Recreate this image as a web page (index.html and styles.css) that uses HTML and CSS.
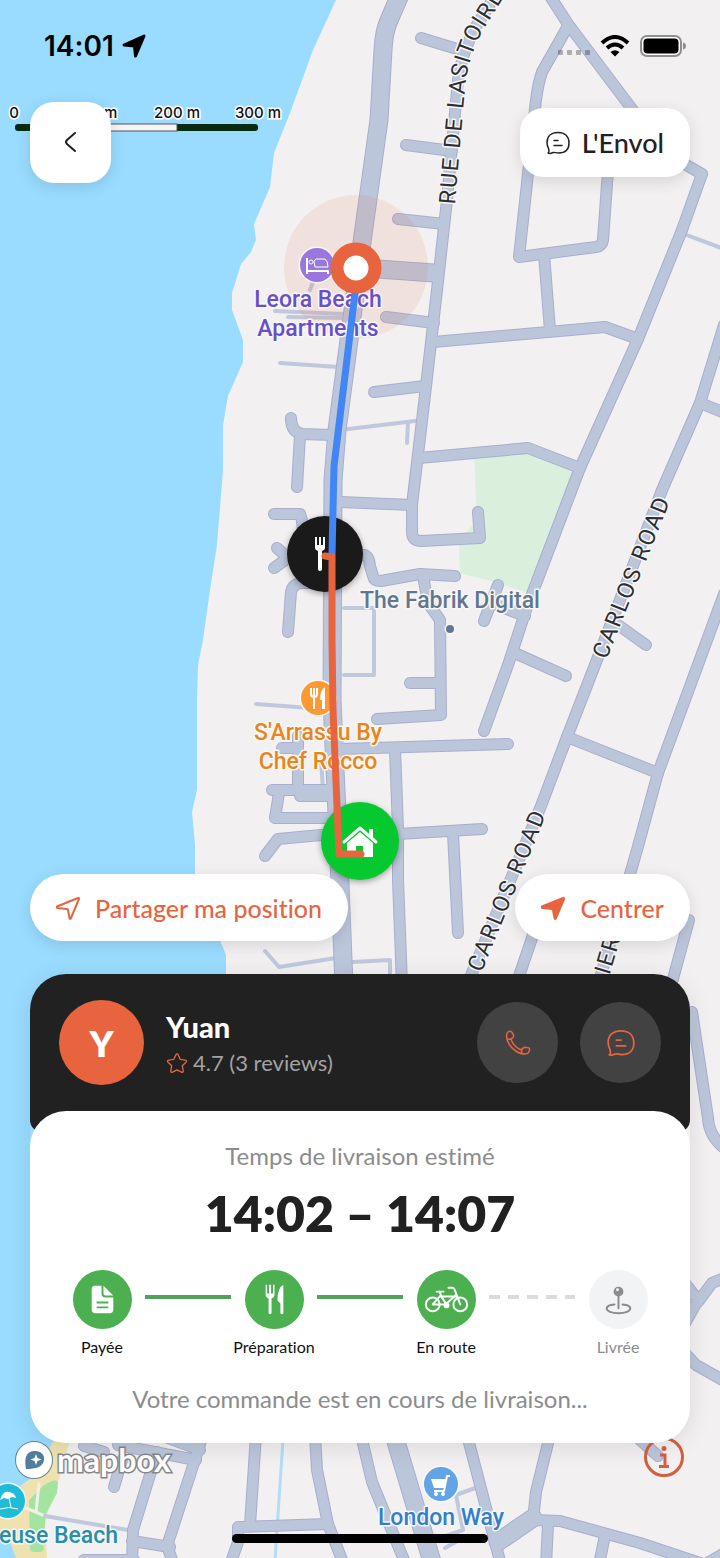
FILE: index.html
```html
<!DOCTYPE html>
<html lang="fr">
<head>
    <meta charset="UTF-8">
    <meta name="viewport" content="width=device-width, initial-scale=1.0">
    <title>Suivi de commande</title>
    <link rel="stylesheet" href="styles.css">
</head>
<body>
    <svg class="map" viewBox="0 0 720 1558" preserveAspectRatio="xMidYMax slice" role="img" aria-label="Carte de la livraison">
        <defs>
            <g id="roads-wide">
                <path d="M402 -10 L390 18 Q384 30 383 50 L379 120 L362 242 L349 340 L337 430 L333 480 L332 700 L339 860 L344 985"/>
                <path d="M364 268 L434 273"/>
                <path d="M394 1435 L433 1565"/>
                <path d="M498 1542 L533 1518"/>
            </g>
            <g id="roads">
                <path d="M500 -12 L475 28 Q461 56 458 80 L447 200 L437 290 L425 395 L412 505 V532 Q412 541 421 541 L480 538 L478 512"/>
                <path d="M421 38 L457 49"/>
                <path d="M406 145 L452 151"/>
                <path d="M398 219 L444 224"/>
                <path d="M386 317 L434 323"/>
                <path d="M374 392 L425 386"/>
                <path d="M433 342 L605 327 L638 339"/>
                <path d="M419 458 L528 448 L580 468"/>
                <path d="M546 -10 L568 24 L635 113 L660 150 L702 174 L682 230 L638 339 L580 468 L526 610 L508 665 L484 731"/>
                <path d="M568 26 L542 72 Q538 84 536 100 L519 257 L596 247 Q602 246 603 240 L608 170"/>
                <path d="M544 254 L550 330"/>
                <path d="M724 325 L700 403 L662 490 L600 652 L567 737 L541 806 L467 985"/>
                <path d="M700 403 L730 415"/>
                <path d="M614 622 L646 645"/>
                <path d="M517 654 L566 676"/>
                <path d="M567 737 L658 773"/>
                <path d="M724 594 L658 773 L637 850 L598 985"/>
                <path d="M548 890 L532 938 L516 985"/>
                <path d="M689 920 L670 990"/>
                <path d="M692 1012 L708 1118 Q709 1136 724 1148"/>
                <path d="M684 1282 L698 1300 L684 1325 M698 1302 L712 1283 L724 1278 M682 1350 L696 1365 L728 1383"/>
                <path d="M291 418 Q291 432 302 434 L332 435 M300 435 L297 487"/>
                <path d="M274 514 H300 Q303 520 303 540"/>
                <path d="M277 548 L288 558 L274 568 M286 557 H310"/>
                <path d="M288 632 L291 592 Q293 583 303 583 H326"/>
                <path d="M340 502 L412 505"/>
                <path d="M364 555 Q369 556 370 566 L373 576 Q374 581 381 581 L420 574 L455 576"/>
                <path d="M423 576 L428 603 L440 620 L441 715 L377 719"/>
                <path d="M410 683 H440"/>
                <path d="M498 585 L484 621 M499 606 L525 616"/>
                <path d="M340 749 L508 744"/>
                <path d="M395 748 L398 830 L398 880 L402 985"/>
                <path d="M398 834 L482 829 M453 833 L458 933"/>
                <path d="M272 790 H332 M298 736 V790 M282 748 H298 M330 796 H300"/>
                <path d="M279 793 L275 818 H332"/>
                <path d="M265 856 L278 839 L332 834"/>
                <path d="M203 1435 L167 1546 L174 1565"/>
                <path d="M157 1452 L133 1530 L132 1565 M132 1541 L170 1547 M84 1560 H134"/>
                <path d="M84 1446 L104 1452 M114 1487 L122 1460 M118 1445 L196 1460 M160 1435 L200 1450"/>
                <path d="M256 1435 L250 1525 M238 1527 L328 1524 M238 1527 L238 1542 L230 1565"/>
                <path d="M315 1435 L317 1470 L328 1524 L344 1565"/>
                <path d="M361 1435 L372 1482 L406 1565"/>
                <path d="M467 1435 L501 1565"/>
                <path d="M550 1435 L536 1492 L533 1520 L560 1521 L640 1543 L700 1563"/>
                <path d="M548 1524 L546 1565 M605 1535 L599 1565 M730 1550 L704 1565"/>
                <path d="M638 1438 L658 1456"/>
            </g>
            <path id="rue-lasitoire" d="M447 204 L455 110 L458 80 Q461 56 475 28 L530 -60"/>
            <path id="carlos-north" d="M599 657 L662 500 L690 430"/>
            <path id="carlos-south" d="M474 970 L541 806 L560 760"/>
            <path id="rue-est" d="M585 1030 L622 905"/>
        </defs>

        <rect class="land" width="720" height="1558"/>
        <path class="sea" d="M0 0 H336 L313 50 L290 113 L274 153 L270 187 L254 224 L256 240 L251 252 L241 264 L232 293 V310 L243 340 V362 L228 396 L223 425 V470 L217 545 L210 590 L203 640 L198 665 L197 700 V790 L192 812 L195 845 V885 L212 915 L220 940 L226 955 V1080 L120 1300 L56 1443 L32 1478 L0 1500Z"/>
        <path class="sand" d="M54 1440 H70 L58 1482 L45 1520 L47 1558 H16 L10 1545 L0 1540 V1500 L32 1478Z"/>
        <path class="sea" d="M0 1542 H10 L16 1558 H0Z"/>
        <path class="park" d="M474 455 L528 448 L580 468 L533 595 L498 583 L460 573 L459 541 L477 520Z"/>
        <path class="green" d="M43 1486 Q57 1477 58 1483 L57 1493 L46 1514 L43 1545 Q46 1552 39 1552 H34 Q29 1552 30 1546 L29 1500Z"/>
        <path class="stream" d="M283 1440 L275 1560"/>
        <path class="path-light" d="M26 1508 L45 1516 M39 1484 L36 1512"/>
        <path class="lane" d="M280 363 L338 367 M340 430 L415 421 M408 422 L407 443 M684 234 L724 249 M344 608 H374 V675 H344 M256 704 L310 708 M321 760 L323 790 M265 951 L279 967 L336 958 M353 962 L390 960 V985 M45 1516 L128 1530 M478 1487 L456 1495 L463 1530 L440 1538 M463 1538 L445 1548 M275 311 L344 314 M288 317 L344 318 M313 282 L310 290"/>

        <use href="#roads-wide" class="road-wide edge"/>
        <use href="#roads" class="road edge"/>
        <use href="#roads-wide" class="road-wide"/>
        <use href="#roads" class="road"/>

        <circle class="pulse" cx="356" cy="267" r="72"/>

        <!-- street names -->
        <g class="street">
            <text dy="8"><textPath href="#rue-lasitoire">RUE DE LASITOIRE</textPath></text>
            <text dy="8"><textPath href="#carlos-north">CARLOS ROAD</textPath></text>
            <text dy="8"><textPath href="#carlos-south">CARLOS ROAD</textPath></text>
            <text dy="8"><textPath href="#rue-est" startOffset="8">GENIER</textPath></text>
        </g>

        <!-- places -->
        <g class="place hotel">
            <circle cx="317" cy="265" r="17"/>
            <path class="glyph-line" d="M307 258 V274 M307 271 H328 V274"/>
            <path class="glyph-line thin" d="M315 267 L314 261 Q316 258 319 259 H325 Q328 261 328 267Z"/>
            <circle class="glyph-line thin" cx="311" cy="262" r="2"/>
            <text x="318" y="307">Leora Beach</text>
            <text x="318" y="336">Apartments</text>
        </g>
        <g class="place office">
            <circle cx="450" cy="629" r="4"/>
            <text x="450" y="608">The Fabrik Digital</text>
        </g>
        <g class="place food">
            <circle cx="318" cy="698" r="17"/>
            <path class="glyph-line" d="M311 688 V694 Q311 697 314 697 Q317 697 317 694 V688 M314 688 V709"/>
            <path class="glyph" d="M325 687 V709 H322 V700 H320 Q320 690 325 687Z"/>
            <text x="318" y="740">S'Arrassu By</text>
            <text x="318" y="769">Chef Rocco</text>
        </g>
        <g class="place shop">
            <circle cx="441" cy="1484" r="17"/>
            <path class="glyph" d="M431 1479 H446 L444 1488 H434Z"/>
            <path class="glyph-line" d="M450 1476 H447 L444 1491 H434"/>
            <circle class="glyph" cx="436" cy="1494" r="2"/>
            <circle class="glyph" cx="443" cy="1494" r="2"/>
            <text x="441" y="1525">London Way</text>
        </g>
        <g class="place beach">
            <circle cx="8" cy="1501" r="17"/>
            <path class="glyph" d="M0 1500 Q3 1490 9 1492 Q15 1493 16 1498 L12 1497 L8 1499 L4 1498Z"/>
            <path class="glyph-line thin" d="M8 1492 L11 1508 M0 1509 Q9 1506 18 1509"/>
            <text class="place-start" x="-1" y="1543">euse Beach</text>
        </g>

        <!-- scale bar -->
        <g class="scale">
            <rect class="scale-dark" x="15" y="124" width="243" height="7" rx="3"/>
            <rect class="scale-light" x="96" y="124" width="81" height="7"/>
            <text x="14" y="118">0</text>
            <text x="96" y="118">100 m</text>
            <text x="177" y="118">200 m</text>
            <text x="258" y="118">300 m</text>
        </g>

        <!-- markers -->
        <circle class="marker-shop" cx="325" cy="554" r="38"/>
        <path class="marker-glyph" d="M315 537 V548 Q315 550 318 551 V570 Q320 572 322 570 V551 Q325 550 325 548 V537 H323 V545 H321 V537 H319 V545 H317 V537Z"/>
        <circle class="marker-home" cx="360" cy="841" r="39"/>
        <path class="marker-roof" d="M344 842 L360 828 L376 842"/>
        <path class="marker-glyph" d="M347 843 L360 832 L373 843 V857 H363 V846 H356 V857 H347Z M369 829 H373 V838 L369 834Z"/>
        <path class="route-done" d="M356 285 L334 466 L332 555"/>
        <path class="route-next" d="M325 556 L332 557 L332 640 L333 710 L339 854 L361 854"/>
        <circle class="courier" cx="356" cy="268" r="19"/>
    </svg>

    <main class="screen">
        <header class="statusbar">
            <div class="clock">
                <span>14:01</span>
                <svg class="locate" viewBox="0 0 24 24" aria-hidden="true"><path d="M2 11 L22 2 L13.500 22 L12.500 12Z"/></svg>
            </div>
            <div class="signals">
                <svg class="dots" viewBox="0 0 32 6" aria-hidden="true">
                    <rect width="5" height="5" rx="1"/><rect x="9" width="5" height="5" rx="1"/><rect x="18" width="5" height="5" rx="1"/><rect x="27" width="5" height="5" rx="1"/>
                </svg>
                <svg class="wifi" viewBox="0 0 30 22" aria-hidden="true">
                    <path d="M2 8 Q15 -4 28 8 M7 13 Q15 6 23 13"/>
                    <path class="wifi-dot" d="M15 21.500 L10.500 17 Q15 13.500 19.500 17Z"/>
                </svg>
                <svg class="battery" viewBox="0 0 46 22" aria-hidden="true">
                    <rect class="battery-case" x="1" y="1" width="40" height="20" rx="6"/>
                    <rect x="3.500" y="3.500" width="35" height="15" rx="4"/>
                    <path class="battery-tip" d="M43 7.500 Q46 8 46 11 Q46 14 43 14.500Z"/>
                </svg>
            </div>
        </header>

        <div class="topbar">
            <button class="back" type="button" aria-label="Retour">
                <svg viewBox="0 0 20 24" aria-hidden="true"><path d="M14 4 L6 11 Q4 13 6 15 L14 22"/></svg>
            </button>
            <button class="place-button" type="button">
                <svg class="icon" viewBox="0 0 24 24" aria-hidden="true"><use href="#chat"/></svg>
                L'Envol
            </button>
        </div>

        <div class="map-actions">
            <button class="pill" type="button">
                <svg class="icon" viewBox="0 0 24 24" aria-hidden="true"><path d="M1 10.500 L22 2 Q23 1.500 23 3 L15 22 Q14 24 13.500 22 L12 14 Q12 13 11 13 L1.500 12 Q0 11.500 1 10.500Z"/></svg>
                Partager ma position
            </button>
            <button class="pill" type="button">
                <svg class="icon filled" viewBox="0 0 24 24" aria-hidden="true"><path d="M1 10.500 L22 2 Q23 1.500 23 3 L15 22 Q14 24 13.500 22 L12 14 Q12 13 11 13 L1.500 12 Q0 11.500 1 10.500Z"/></svg>
                Centrer
            </button>
        </div>

        <section class="order">
            <div class="driver">
                <div class="avatar">Y</div>
                <div class="driver-info">
                    <h1 class="driver-name">Yuan</h1>
                    <p class="rating">
                        <svg viewBox="0 0 24 24" aria-hidden="true"><path d="M12 2 Q12.800 2 13.200 3 L15.500 8 L21 8.800 Q23.500 9.500 21.500 11.500 L17.800 15 L18.800 20.500 Q18.800 23 16.800 22 L12 19.500 L7.200 22 Q5.200 23 5.200 20.500 L6.200 15 L2.500 11.500 Q.500 9.500 3 8.800 L8.500 8 L10.800 3 Q11.200 2 12 2Z"/></svg>
                        4.7 (3 reviews)
                    </p>
                </div>
                <button class="round" type="button" aria-label="Appeler">
                    <svg viewBox="0 0 28 28" aria-hidden="true"><path d="M4 3 Q7 1 9 5 Q10.500 7.500 8.500 9 Q7 10 7.500 11.500 Q10 17.500 16 20.500 Q17.500 21 18.500 19.500 Q20 18 23 18.500 Q26 18.500 25.500 20.500 Q25 25 21 25 C12 25 3 16 2.500 7 Q2.500 4 4 3Z M3 10 Q6 11 8.500 9 M18 25 Q17 22 18.500 19.500"/></svg>
                </button>
                <button class="round" type="button" aria-label="Envoyer un message">
                    <svg viewBox="0 0 24 24" aria-hidden="true">
                        <g id="chat"><path d="M2 22 C3.500 21 3 19 2.500 17.500 C1.500 15.500 1 13.500 1 11.500 C1 5.500 5 1.500 12 1.500 C19 1.500 23 5.500 23 12 C23 18.500 19 22 12.500 22 C10 22 8.500 21 7 21.500 C5 22.500 3.500 23 2 22Z M8 9.500 H12 M8 14.500 H16"/></g>
                    </svg>
                </button>
            </div>

            <div class="delivery">
                <p class="hint">Temps de livraison estimé</p>
                <p class="eta">14:02 – 14:07</p>
                <ol class="steps">
                    <li class="step">
                        <svg class="step-icon" viewBox="0 0 60 60" aria-hidden="true">
                            <path class="solid" d="M22 16 H29 V24 Q29 28 33 28 H41 V40 Q41 44 37 44 H23 Q19 44 19 40 V20 Q19 16 22 16Z M31 16 L41 26 H33 Q31 26 31 24Z"/>
                            <path class="cut" d="M24 33 H36 M24 38 H36"/>
                        </svg>
                        Payée
                    </li>
                    <li class="line"></li>
                    <li class="step">
                        <svg class="step-icon" viewBox="0 0 60 60" aria-hidden="true">
                            <path class="solid" d="M21 15 V25 Q21 28 24 29 V44 Q25.500 46 27 44 V29 Q30 28 30 25 V15 H28.500 V24 H26.500 V15 H24.500 V24 H22.500 V15Z M39 15 V44 Q37.500 46 36 44 V34 L33 31 Q33 18 39 15Z"/>
                        </svg>
                        Préparation
                    </li>
                    <li class="line"></li>
                    <li class="step">
                        <svg class="step-icon" viewBox="0 0 60 60" aria-hidden="true">
                            <circle class="stroke" cx="16" cy="35" r="7"/>
                            <circle class="stroke" cx="44" cy="35" r="7"/>
                            <path class="stroke" d="M16 35 H29 L39 26 M24 26 L30 35 M23 27 L16 35 M24 27 H39 M20 22 H27 M23 22 L25 27 M32 18 H36 Q38 18 39 22 L44 35"/>
                            <circle class="solid" cx="30" cy="36" r="3"/>
                        </svg>
                        En route
                    </li>
                    <li class="line pending"></li>
                    <li class="step todo">
                        <svg class="step-icon" viewBox="0 0 60 60" aria-hidden="true">
                            <circle class="solid" cx="30" cy="22" r="5"/>
                            <path class="stroke" d="M30 26 V39 M26 35 C20 35.500 18 37 18 39 C18 42 23 44 30 44 C37 44 42 42 42 39 C42 37 40 35.500 34 35"/>
                            <circle class="shine" cx="29" cy="20" r="1.500"/>
                        </svg>
                        Livrée
                    </li>
                </ol>
                <p class="hint">Votre commande est en cours de livraison...</p>
            </div>
        </section>

        <footer class="credits">
            <div class="mapbox">
                <svg viewBox="0 0 40 40" aria-hidden="true">
                    <circle class="mb-ring" cx="20" cy="20" r="18"/>
                    <path class="mb-drop" d="M12 29 C10 18 12 11 21 11 C27 11 31 15 30 20 C29 27 22 29 12 29Z"/>
                    <path class="mb-star" d="M22 14 L23.500 18 L27.500 19.500 L23.500 21 L22 25 L20.500 21 L16.500 19.500 L20.500 18Z"/>
                </svg>
                <span>mapbox</span>
            </div>
            <button class="info" type="button" aria-label="Informations sur la carte">
                <svg viewBox="0 0 40 40" aria-hidden="true"><circle cx="20" cy="20" r="18.500"/><path d="M16 18 H21 V29 M15 29.500 H25"/><circle class="info-dot" cx="20" cy="11.500" r="2.500"/></svg>
            </button>
        </footer>
        <div class="home-indicator"></div>
    </main>
</body>
</html>
```
FILE: styles.css
```css
:root {
    --orange: #e8643f;
    --green: #4caf50;
    --dark: #212121;
    --grey: #8c8c8c;
}

* {
    box-sizing: border-box;
}

body {
    margin: 0;
    position: relative;
    overflow-x: hidden;
    font-family: Lato, "Liberation Sans", sans-serif;
    font-variant-ligatures: none;
    color: var(--dark);
    background: #f2f0f0;
}

h1, p, ol {
    margin: 0;
    padding: 0;
    list-style: none;
}

button {
    border: none;
    padding: 0;
    font-family: inherit;
    font-variant-ligatures: none;
    cursor: pointer;
}

/* map */
.map {
    position: absolute;
    top: 0;
    left: 0;
    width: 100%;
    height: 100%;
}

.map path, .map use {
    stroke-linejoin: round;
}

.land { fill: #f2f0f0; }
.sea { fill: #99dcff; }
.sand { fill: #efe2b0; }
.park { fill: #dbf0dc; }
.green { fill: #a5e3a1; }

.stream, .path-light, .lane, .road, .road-wide {
    fill: none;
    stroke-linecap: round;
}

.stream { stroke: #b3dcf7; stroke-width: 3px; }
.path-light { stroke: #efefeb; stroke-width: 3px; }
.lane { stroke: #bfc8dc; stroke-width: 4px; }
.road { stroke: #bcc6da; stroke-width: 10px; }
.road-wide { stroke: #bcc6da; stroke-width: 17px; }
.road.edge { stroke: #a8aecd; stroke-width: 12px; }
.road-wide.edge { stroke: #a8aecd; stroke-width: 19px; }

.pulse { fill: rgba(232, 100, 63, 0.1); }

.street, .place {
    font-family: Roboto, "Liberation Sans", sans-serif;
    font-weight: 500;
    paint-order: stroke;
    stroke: #f8f7f7;
    stroke-width: 3px;
    stroke-linejoin: round;
}

.street {
    font-size: 23px;
    font-weight: 400;
    letter-spacing: 2px;
    fill: #2e2e32;
}

.place {
    font-size: 23px;
    text-anchor: middle;
}

.hotel { fill: #6a4fc8; }
.hotel > circle:first-child { fill: #9a77dc; }
.office { fill: #5f7890; }
.food { fill: #e8861b; }
.food > circle:first-child { fill: #fb9a35; }
.shop { fill: #3080cc; }
.shop > circle:first-child { fill: #62a4e5; }
.beach { fill: #2690a8; }
.beach > circle:first-child { fill: #1fbcd8; }
.place .glyph { fill: #fff; stroke: none; }
.glyph-line { fill: none; stroke: #fff; stroke-width: 2px; }
.glyph-line.thin { stroke-width: 1px; }
.place-start { text-anchor: start; }

.scale {
    font-family: Inter, "Liberation Sans", sans-serif;
    font-size: 15px;
    font-weight: 500;
    text-anchor: middle;
}

.scale text {
    fill: #111;
    stroke: #fff;
    stroke-width: 3px;
    paint-order: stroke;
}

.scale-dark { fill: #062b12; }
.scale-light { fill: #f5f5f5; stroke: #555; stroke-width: 1px; }

.marker-shop, .marker-home {
    filter: drop-shadow(0 2px 3px rgba(0, 0, 0, 0.35));
}

.marker-shop { fill: #1a1a1a; }
.marker-home { fill: #05c92f; }
.marker-glyph { fill: #fff; }
.marker-roof { fill: none; stroke: #fff; stroke-width: 3px; stroke-linecap: round; }
.route-done, .route-next { fill: none; stroke-width: 7px; stroke-linecap: round; }
.route-done { stroke: #4285f4; }
.route-next { stroke: var(--orange); }
.courier { fill: #fff; stroke: var(--orange); stroke-width: 13px; }

/* screen */
.screen {
    position: relative;
    min-height: 100vh;
    display: flex;
    flex-direction: column;
}

.statusbar {
    display: flex;
    justify-content: space-between;
    align-items: center;
    height: 92px;
    padding: 0 34px 0 44px;
}

.clock {
    display: flex;
    align-items: center;
    gap: 8px;
    font-family: Inter, "Liberation Sans", sans-serif;
    font-size: 28px;
    font-weight: 600;
    color: #000;
}

.locate {
    width: 24px;
    height: 24px;
    stroke: #000;
    stroke-width: 3px;
    stroke-linejoin: round;
}

.signals {
    display: flex;
    align-items: center;
    gap: 10px;
}

.dots { width: 32px; height: 6px; margin-top: 14px; fill: rgba(0, 0, 0, 0.28); }
.wifi { width: 30px; height: 22px; fill: none; stroke: #000; stroke-width: 4px; }
.wifi-dot { fill: #000; stroke: none; }
.battery { width: 46px; height: 22px; }
.battery-case { fill: #fff; stroke: #8f8f8f; stroke-width: 2px; }
.battery-tip { fill: #8f8f8f; }

.topbar, .map-actions {
    display: flex;
    justify-content: space-between;
    align-items: center;
    padding: 0 30px;
}

.topbar {
    margin-top: 10px;
}

.back, .place-button, .pill {
    background: #fff;
    box-shadow: 0 4px 16px rgba(0, 0, 0, 0.12);
}

.back {
    width: 81px;
    height: 81px;
    border-radius: 24px;
}

.back svg {
    width: 20px;
    height: 24px;
    fill: none;
    stroke: var(--dark);
    stroke-width: 2px;
    stroke-linecap: round;
}

.place-button, .pill {
    display: flex;
    align-items: center;
    color: var(--dark);
    font-weight: 500;
}

.place-button {
    gap: 12px;
    height: 69px;
    padding: 0 26px;
    border-radius: 24px;
    font-size: 27px;
}

.icon {
    width: 24px;
    height: 24px;
    fill: none;
    stroke: currentColor;
    stroke-width: 2px;
    stroke-linecap: round;
    stroke-linejoin: round;
}

.place-button .icon {
    stroke-width: 1.5;
}

.icon.filled {
    fill: currentColor;
}

.map-actions {
    margin-top: auto;
}

.pill {
    gap: 15px;
    height: 67px;
    padding: 0 26px;
    border-radius: 34px;
    font-size: 25px;
    color: var(--orange);
}

/* order card */
.order {
    position: relative;
    z-index: 1;
    margin: 33px 30px 0;
    border-radius: 36px;
    box-shadow: 0 4px 24px rgba(0, 0, 0, 0.1);
}

.driver {
    display: flex;
    align-items: center;
    gap: 22px;
    padding: 26px 29px 47px;
    border-radius: 36px 36px 12px 12px;
    background: var(--dark);
    color: #fff;
}

.avatar {
    display: flex;
    align-items: center;
    justify-content: center;
    width: 85px;
    height: 85px;
    border-radius: 50%;
    background: var(--orange);
    font-size: 36px;
    font-weight: 800;
}

.driver-info {
    flex: 1;
    padding-top: 4px;
}

.driver-name {
    font-size: 29px;
    line-height: 36px;
    font-weight: 900;
}

.rating {
    display: flex;
    align-items: center;
    gap: 5px;
    font-size: 22px;
    line-height: 36px;
    color: #a3a3a3;
}

.rating svg {
    width: 22px;
    height: 22px;
}

.rating svg, .round svg {
    fill: none;
    stroke: var(--orange);
    stroke-width: 1.5;
    stroke-linecap: round;
    stroke-linejoin: round;
}

.round {
    display: flex;
    align-items: center;
    justify-content: center;
    width: 81px;
    height: 81px;
    border-radius: 50%;
    background: #424242;
}

.round svg {
    width: 28px;
    height: 28px;
}

.delivery {
    margin-top: -21px;
    padding: 30px 30px 29px;
    border-radius: 36px;
    background: #fff;
    text-align: center;
}

.hint {
    font-size: 24px;
    line-height: 30px;
    color: var(--grey);
}

.eta {
    margin-top: 12px;
    font-size: 50px;
    line-height: 60px;
    font-weight: 800;
}

.steps {
    display: grid;
    grid-template-columns: 84px 1fr 84px 1fr 84px 1fr 84px;
    margin: 27px 0;
}

.step {
    display: flex;
    flex-direction: column;
    align-items: center;
    gap: 8px;
    font-size: 16px;
    line-height: 20px;
    color: #111;
}

.step-icon {
    width: 59px;
    height: 59px;
    border-radius: 50%;
    background: var(--green);
}

.solid { fill: #fff; }
.cut { stroke: var(--green); stroke-width: 2px; }
.stroke { fill: none; stroke: #fff; stroke-width: 2px; stroke-linecap: round; stroke-linejoin: round; }

.todo { color: var(--grey); }
.todo .step-icon { background: #f1f3f5; }
.todo .solid { fill: var(--grey); }
.todo .stroke { stroke: var(--grey); }
.shine { fill: #f1f3f5; }

.line {
    height: 4px;
    margin: 25px 1px 0;
    background: #52a35a;
}

.line.pending {
    background: repeating-linear-gradient(90deg, #dcdcdc 0 11px, transparent 11px 19px);
}

/* bottom of the map */
.credits {
    display: flex;
    justify-content: space-between;
    align-items: center;
    margin-top: -9px;
    padding: 0 36px 0 14px;
}

.mapbox {
    display: flex;
    align-items: center;
    gap: 3px;
    padding-top: 6px;
    font-size: 32px;
    line-height: 40px;
    font-weight: 700;
    color: #fff;
    -webkit-text-stroke: 3px #85868c;
    paint-order: stroke;
}

.mapbox svg {
    width: 40px;
    height: 40px;
}

.mb-ring { fill: #fff; stroke: #6a8494; stroke-width: 2px; }
.mb-drop { fill: #517f9b; }
.mb-star { fill: #fff; }

.info {
    height: 40px;
    background: none;
}

.info svg {
    display: block;
    width: 40px;
    height: 40px;
    fill: none;
    stroke: #d4603f;
    stroke-width: 3px;
}

.info .info-dot { fill: #d4603f; stroke: none; }

.home-indicator {
    width: 256px;
    height: 9px;
    margin: 54px auto 15px;
    border-radius: 5px;
    background: #000;
}
```
